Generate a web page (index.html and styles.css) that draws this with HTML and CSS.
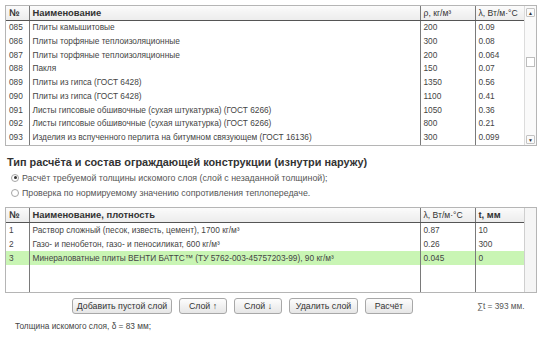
FILE: index.html
```html
<!DOCTYPE html>
<html lang="ru">
  <head>
    <meta charset="UTF-8" />
    <title>Расчёт толщины утеплителя</title>
    <link rel="stylesheet" href="styles.css">
  </head>
  <body>
    <div class="page">
      <div class="grid grid-top">
        <table class="list">
          <colgroup>
            <col class="c-num" />
            <col class="c-name" />
            <col class="c-rho" />
            <col class="c-lam" />
          </colgroup>
          <thead>
            <tr>
              <th>№</th>
              <th>Наименование</th>
              <th class="plain">ρ, кг/м³</th>
              <th class="plain">λ, Вт/м·°С</th>
            </tr>
          </thead>
          <tbody>
            <tr><td>085</td><td>Плиты камышитовые</td><td>200</td><td>0.09</td></tr>
            <tr><td>086</td><td>Плиты торфяные теплоизоляционные</td><td>300</td><td>0.08</td></tr>
            <tr><td>087</td><td>Плиты торфяные теплоизоляционные</td><td>200</td><td>0.064</td></tr>
            <tr><td>088</td><td>Пакля</td><td>150</td><td>0.07</td></tr>
            <tr><td>089</td><td>Плиты из гипса (ГОСТ 6428)</td><td>1350</td><td>0.56</td></tr>
            <tr><td>090</td><td>Плиты из гипса (ГОСТ 6428)</td><td>1100</td><td>0.41</td></tr>
            <tr><td>091</td><td>Листы гипсовые обшивочные (сухая штукатурка) (ГОСТ 6266)</td><td>1050</td><td>0.36</td></tr>
            <tr><td>092</td><td>Листы гипсовые обшивочные (сухая штукатурка) (ГОСТ 6266)</td><td>800</td><td>0.21</td></tr>
            <tr><td>093</td><td>Изделия из вспученного перлита на битумном связующем (ГОСТ 16136)</td><td>300</td><td>0.099</td></tr>
          </tbody>
        </table>
        <div class="scrollbar">
          <span class="arrow">▲</span>
          <span class="thumb"></span>
          <span class="arrow">▼</span>
        </div>
      </div>

      <h2 class="section-title">Тип расчёта и состав ограждающей конструкции (изнутри наружу)</h2>

      <label class="radio"><span class="dot checked"></span>Расчёт требуемой толщины искомого слоя (слой с незаданной толщиной);</label>
      <label class="radio"><span class="dot"></span>Проверка по нормируемому значению сопротивления теплопередаче.</label>

      <div class="grid grid-layers">
        <table class="list">
          <colgroup>
            <col class="c-num" />
            <col class="c-name" />
            <col class="c-rho" />
            <col class="c-lam" />
          </colgroup>
          <thead>
            <tr>
              <th>№</th>
              <th>Наименование, плотность</th>
              <th class="plain">λ, Вт/м·°С</th>
              <th>t, мм</th>
            </tr>
          </thead>
          <tbody>
            <tr><td>1</td><td>Раствор сложный (песок, известь, цемент), 1700 кг/м³</td><td>0.87</td><td>10</td></tr>
            <tr><td>2</td><td>Газо- и пенобетон, газо- и пеносиликат, 600 кг/м³</td><td>0.26</td><td>300</td></tr>
            <tr class="selected"><td>3</td><td>Минераловатные плиты ВЕНТИ БАТТС™ (ТУ 5762-003-45757203-99), 90 кг/м³</td><td>0.045</td><td>0</td></tr>
            <tr class="filler"><td></td><td></td><td></td><td></td></tr>
          </tbody>
        </table>
        <div class="scrollbar empty"></div>
      </div>

      <div class="actions">
        <div class="buttons">
          <button class="btn btn-add">Добавить пустой слой</button>
          <button class="btn btn-move">Слой ↑</button>
          <button class="btn btn-move">Слой ↓</button>
          <button class="btn btn-del">Удалить слой</button>
          <button class="btn btn-move">Расчёт</button>
        </div>
        <span class="total">∑t = 393 мм.</span>
      </div>

      <p class="result">Толщина искомого слоя, δ = 83 мм;</p>
    </div>
  </body>
</html>
```

FILE: styles.css
```css
body {
  margin: 0;
  background-color: #fff;
  font-family: "Liberation Sans", Arial, sans-serif;
  font-size: 8.3px;
  color: #444;
}
.page {
  width: 532px;
  padding: 5px 0 0 5px;
}
.grid {
  display: flex;
  border: 1px solid #b5b5b5;
  box-sizing: border-box;
}
.grid-top {
  height: 141px;
}
.grid-layers {
  height: 86px;
  margin-top: 7px;
}
.list {
  width: 519px;
  border-collapse: collapse;
  table-layout: fixed;
}
.c-num {
  width: 23px;
}
.c-rho {
  width: 55px;
}
.c-lam {
  width: 49px;
}
th,
td {
  padding: 0 3px;
  text-align: left;
  white-space: nowrap;
  overflow: hidden;
  border-left: 1px solid #7a7a7a;
}
th:first-child,
td:first-child {
  border-left: none;
}
th {
  height: 14px;
  line-height: 14px;
  font-size: 9.4px;
  font-weight: bold;
  color: #333;
  background: linear-gradient(#fbfbfb, #ececec);
  border-bottom: 1px solid #555;
}
th.plain {
  font-size: 8.6px;
  font-weight: normal;
}
td {
  height: 13.7px;
  line-height: 13.7px;
}
.grid-layers td {
  height: 14px;
  line-height: 14px;
}
.grid-layers .filler td {
  height: auto;
}
.selected td {
  background-color: #c9f5b4;
}
.scrollbar {
  width: 12px;
  flex: none;
  display: flex;
  flex-direction: column;
  justify-content: space-between;
  align-items: center;
  background-color: #fafafa;
  border-left: 1px solid #dcdcdc;
  padding: 2px 0 1px;
  box-sizing: border-box;
}
.scrollbar.empty {
  background-color: #f5f5f5;
  border-left: 1px solid #cfcfcf;
}
.arrow {
  width: 9px;
  height: 9px;
  border: 1px solid #c3c3c3;
  border-radius: 1px;
  font-size: 5px;
  line-height: 9px;
  text-align: center;
  color: #333;
  box-sizing: border-box;
}
.thumb {
  width: 7px;
  height: 8px;
  border: 1px solid #bdbdbd;
  background-color: #fff;
  margin-bottom: 28px;
}
.section-title {
  margin: 9px 0 0 2px;
  font-size: 10.9px;
  line-height: 15px;
  font-weight: bold;
  color: #333;
}
.radio {
  display: flex;
  align-items: center;
  gap: 3px;
  height: 15px;
  padding-left: 6px;
  font-size: 8.8px;
  color: #555;
}
.dot {
  width: 8px;
  height: 8px;
  border: 1px solid #a5a5a5;
  border-radius: 50%;
  box-sizing: border-box;
  display: flex;
  align-items: center;
  justify-content: center;
  background-color: #fff;
}
.dot.checked::after {
  content: "";
  width: 3px;
  height: 3px;
  border-radius: 50%;
  background-color: #333;
}
.actions {
  display: flex;
  align-items: center;
  margin-top: 5px;
  height: 16px;
}
.buttons {
  display: flex;
  gap: 7px;
  margin-left: 67px;
}
.btn {
  height: 16px;
  padding: 0;
  font-family: inherit;
  font-size: 8.8px;
  color: #333;
  background: linear-gradient(#fdfdfd, #e6e6e6);
  border: 1px solid #a8a8a8;
  border-radius: 3px;
}
.btn-add {
  width: 100px;
}
.btn-move {
  width: 48px;
}
.btn-del {
  width: 69px;
}
.total {
  margin-left: 64px;
  color: #555;
}
.result {
  margin: 7px 0 0 10px;
  color: #444;
}
```
